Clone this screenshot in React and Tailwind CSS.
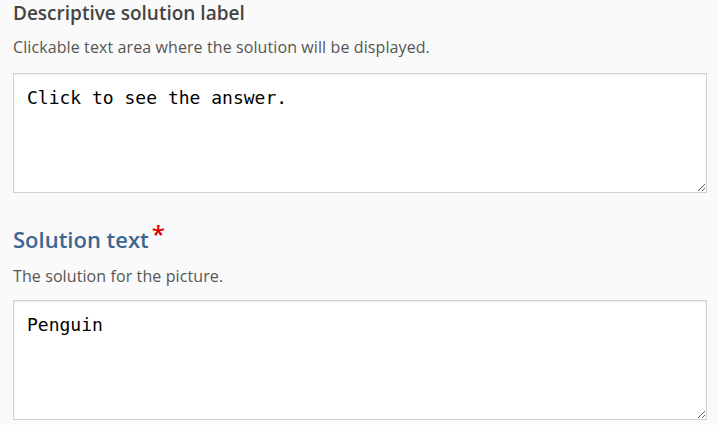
export default function App() {
  return (
    <div className="min-h-screen bg-[#fafafa] px-[13px]" style={{ fontFamily: '"Open Sans", "Liberation Sans", sans-serif' }}>
      <div className="w-[694px]">
        <label className="block text-[19px] leading-[26px] font-semibold text-[#444]">
          Descriptive solution label
        </label>
        <p className="mt-[10px] text-[16px] leading-[22px] text-[#555] tracking-[0.1px]">
          Clickable text area where the solution will be displayed.
        </p>
        <textarea
          className="mt-[15px] block w-full h-[120px] border border-[#d0d0d0] bg-white px-[13px] pt-[13px] text-[18px] leading-[21px] text-black outline-none shadow-[inset_0_1px_2px_rgba(0,0,0,0.08)]"
          style={{ fontFamily: '"DejaVu Sans Mono", "Liberation Mono", monospace' }}
          defaultValue="Click to see the answer."
        />

        <label className="mt-[31px] flex items-start text-[22px] leading-[30px] font-semibold text-[#3d6693]">
          Solution text
          <span className="ml-[3px] -mt-[5px] text-[24px] leading-[30px] text-[#e00000]">*</span>
        </label>
        <p className="mt-[11px] text-[16px] leading-[22px] text-[#555] tracking-[0.1px]">
          The solution for the picture.
        </p>
        <textarea
          className="mt-[13px] block w-full h-[120px] border border-[#d0d0d0] bg-white px-[13px] pt-[13px] text-[18px] leading-[21px] text-black outline-none shadow-[inset_0_1px_2px_rgba(0,0,0,0.08)]"
          style={{ fontFamily: '"DejaVu Sans Mono", "Liberation Mono", monospace' }}
          defaultValue="Penguin"
        />
      </div>
    </div>
  );
}
